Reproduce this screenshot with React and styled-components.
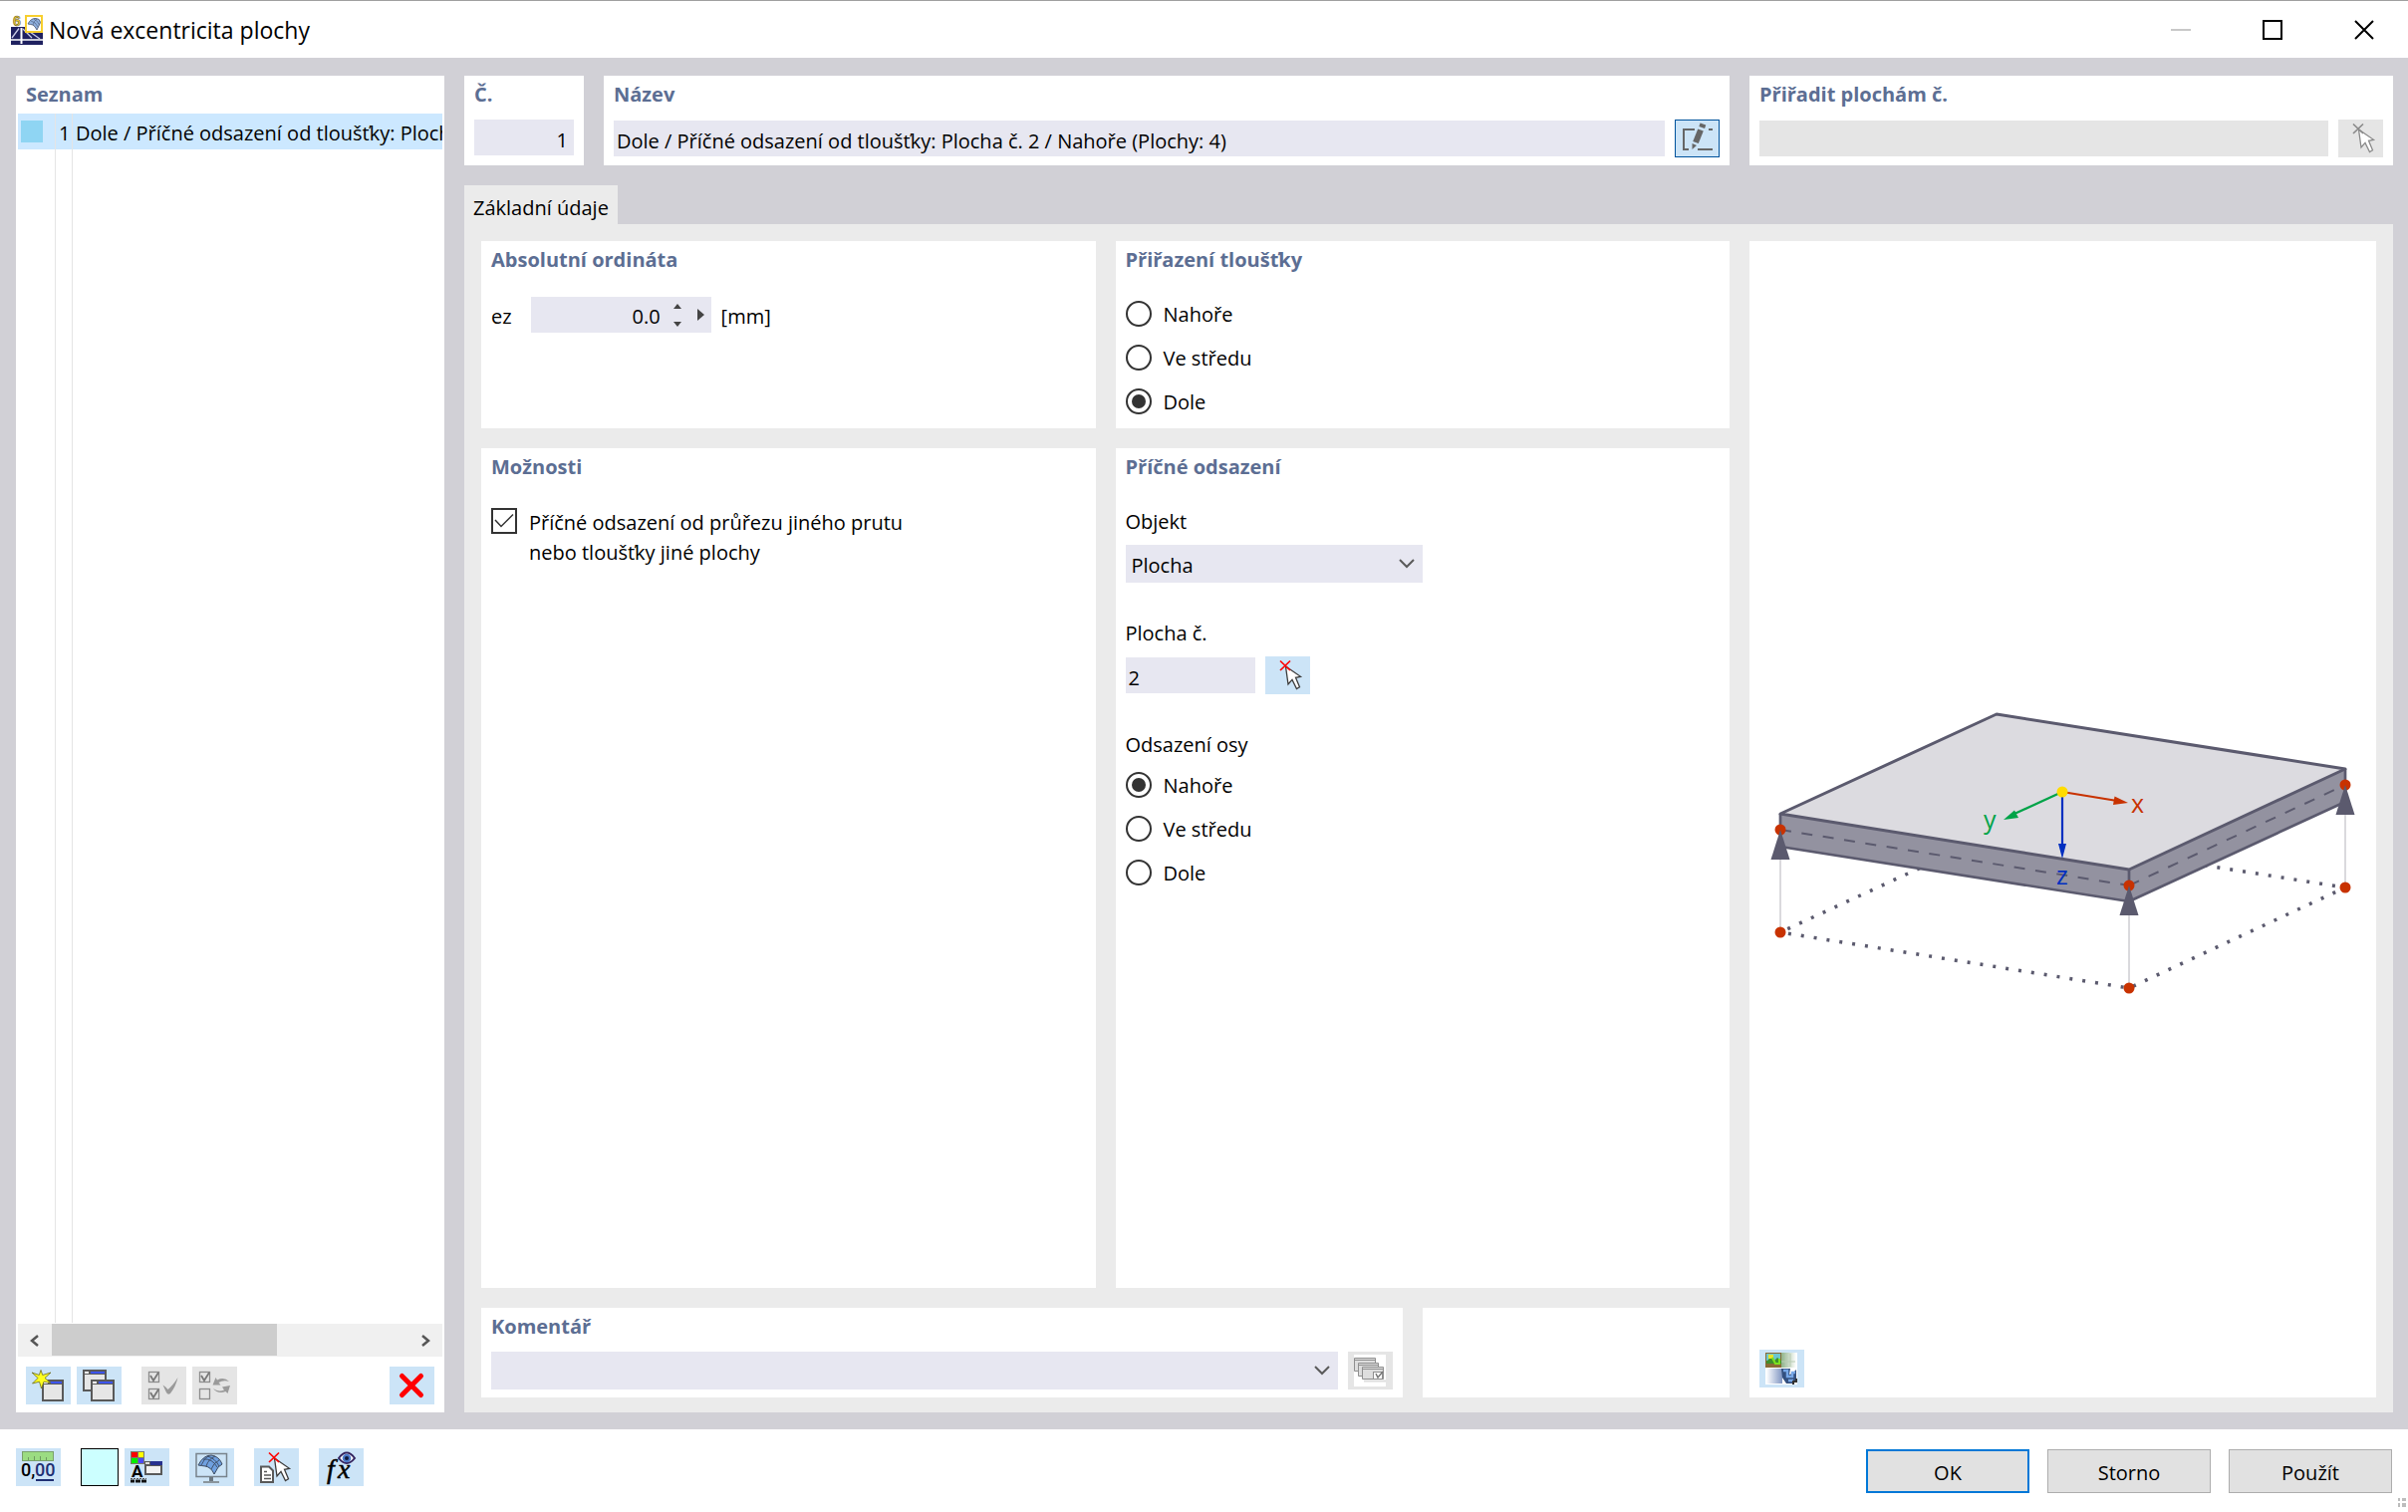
import React, { useState } from "react";
import styled, { createGlobalStyle, css } from "styled-components";

const INK = "#595959";

const GlobalStyle = createGlobalStyle`
  *, *::before, *::after { box-sizing: border-box; }
  body { margin: 0; background: #fff; }
  body, button, input, select {
    font-family: "Open Sans", "Noto Sans", sans-serif;
    font-size: 20px;
    line-height: 28px;
    color: #000;
  }
  h1, h2, p, fieldset { margin: 0; padding: 0; border: 0; min-width: 0; }
`;

const Window = styled.div`
  min-height: 100vh;
  display: flex;
  flex-direction: column;
  background: #fff;
`;

const TitleBar = styled.header`
  height: 58px;
  flex: none;
  display: flex;
  align-items: center;
  gap: 6px;
  padding: 0 19px 0 11px;
  border-top: 1px solid #a0a0a0;
`;

const WindowTitle = styled.h1`
  flex: 1;
  font-size: 23px;
  line-height: 32px;
  font-weight: 400;
`;

const CaptionButton = styled.button`
  width: 50px;
  height: 56px;
  padding: 0;
  border: 0;
  background: none;
  display: grid;
  place-items: center;
`;

const CaptionButtons = styled.div`
  display: flex;
  gap: 42px;
`;

const Body = styled.main`
  flex: 1;
  display: grid;
  grid-template-columns: 430px minmax(0, 1fr);
  gap: 20px;
  padding: 18px 15px 17px 16px;
  background: #d1d0d6;
`;

const Panel = styled.section`
  background: #fff;
  min-width: 0;
  padding: 5px 10px 8px;
  display: flex;
  flex-direction: column;
`;

const Heading = styled.h2`
  font-size: 20px;
  line-height: 28px;
  font-weight: 700;
  color: #5c6e93;
`;

const PanelBody = styled.div`
  padding-top: 27px;
  display: flex;
  flex-direction: column;
`;

const Row = styled.div`
  display: flex;
  align-items: center;
  gap: 10px;
  min-height: 36px;
  padding-top: ${(p) => p.$top || 0}px;
`;

const RowText = styled.span`
  padding-top: 3px;
`;

const field = css`
  height: 36px;
  border: 0;
  border-radius: 0;
  outline: 0;
  background: #e7e7f1;
  padding: 4px 6px 0 3px;
`;

const TextField = styled.input`
  ${field}
  flex: ${(p) => (p.$width ? "none" : "1")};
  width: ${(p) => (p.$width ? `${p.$width}px` : "auto")};
  min-width: 0;
  text-align: ${(p) => p.$align || "left"};
  &:disabled { background: #e5e5e5; }
`;

const IconButton = styled.button`
  width: 45px;
  height: 38px;
  flex: none;
  padding: 0;
  border: 0;
  background: #cce4f7;
  display: block;
  box-shadow: ${(p) => (p.$active ? "inset 0 0 0 1px #00539c" : "none")};
  &:disabled { background: #e5e5e5; }
  svg { display: block; }
`;

/* List column */

const ListPanel = styled(Panel)`
  padding: 5px 2px 8px;
`;

const ListHeading = styled(Heading)`
  padding-left: 8px;
`;

const List = styled.ul`
  flex: 1;
  list-style: none;
  margin: 5px 0 1px;
  padding: 0;
  overflow: hidden;
  background:
    linear-gradient(#e5e5e5, #e5e5e5) 37px 0 / 1px 100% no-repeat,
    linear-gradient(#e5e5e5, #e5e5e5) 54px 0 / 1px 100% no-repeat;
`;

const ListRow = styled.li`
  display: grid;
  grid-template-columns: 38px 17px minmax(0, 1fr);
  height: 36px;
  background: #cce8ff;
  white-space: nowrap;
  overflow: hidden;
`;

const ListCell = styled.span`
  padding: 6px 0 0 3px;
  overflow: hidden;
  border-right: ${(p) => (p.$last ? "0" : "1px solid #e5e5e5")};
`;

const Swatch = styled.span`
  display: block;
  width: 22px;
  height: 22px;
  margin-top: 1px;
  background: #8fd5f3;
`;

const ScrollBar = styled.div`
  height: 33px;
  display: grid;
  grid-template-columns: 34px minmax(0, 1fr) 34px;
  background: #f0f0f0;
`;

const ScrollButton = styled.button`
  padding: 0;
  border: 0;
  background: none;
  display: grid;
  place-items: center;
`;

const ScrollThumb = styled.div`
  width: 63%;
  height: 32px;
  background: #cdcdcd;
`;

const ListTools = styled.div`
  display: flex;
  gap: 6px;
  padding: 10px 8px 0;
`;

const ToolGap = styled.span`
  width: ${(p) => (p.$fill ? "auto" : "8px")};
  flex: ${(p) => (p.$fill ? "1" : "none")};
`;

/* Content column */

const Content = styled.div`
  display: flex;
  flex-direction: column;
  min-width: 0;
`;

const TopPanels = styled.div`
  display: grid;
  grid-template-columns: 120px minmax(0, 1130fr) minmax(0, 646fr);
  gap: 20px;
`;

const TabList = styled.div`
  display: flex;
  padding-top: 20px;
`;

const Tab = styled.button`
  height: 39px;
  border: 0;
  padding: 6px 9px 0;
  background: #ebebeb;
`;

const TabPage = styled.div`
  flex: 1;
  display: grid;
  grid-template-columns: minmax(0, 1253fr) minmax(0, 629fr);
  gap: 20px;
  padding: 17px 17px 15px;
  background: #ebebeb;
`;

const Form = styled.div`
  display: grid;
  grid-template-rows: 188px minmax(0, 1fr) auto;
  gap: 20px;
  min-width: 0;
`;

const Halves = styled.div`
  display: grid;
  grid-template-columns: minmax(0, 1fr) minmax(0, 1fr);
  gap: 20px;
`;

const CommentRow = styled.div`
  display: grid;
  grid-template-columns: minmax(0, 3fr) minmax(0, 1fr);
  gap: 20px;
`;

const Choice = styled.label`
  display: flex;
  gap: 12px;
  min-height: 28px;
  line-height: ${(p) => p.$lineHeight || 28}px;
`;

const Radio = styled.input.attrs({ type: "radio" })`
  appearance: none;
  width: 26px;
  height: 26px;
  flex: none;
  margin: 0;
  border: 2px solid #333;
  border-radius: 50%;
  background: #fff;
  display: grid;
  place-items: center;
  &:checked::before {
    content: "";
    width: 14px;
    height: 14px;
    border-radius: 50%;
    background: #333;
  }
`;

const CheckBoxFrame = styled.span`
  display: grid;
  width: 26px;
  height: 26px;
  flex: none;
  > * { grid-area: 1 / 1; }
  svg { pointer-events: none; visibility: ${(p) => (p.$on ? "visible" : "hidden")}; }
`;

const CheckBox = styled.input.attrs({ type: "checkbox" })`
  appearance: none;
  margin: 0;
  width: 26px;
  height: 26px;
  border: 2px solid #333;
  background: #fff;
`;

const RadioGroup = styled.fieldset`
  display: flex;
  flex-direction: column;
  gap: 16px;
`;

const Legend = styled.legend`
  padding: 0;
  margin-bottom: 13px;
`;

const FieldGroup = styled.div`
  display: flex;
  flex-direction: column;
  gap: 9px;
  margin-bottom: 37px;
`;

const SelectFrame = styled.div`
  display: grid;
  align-items: center;
  flex: ${(p) => (p.$width ? "none" : "1")};
  width: ${(p) => (p.$width ? `${p.$width}px` : "auto")};
  min-width: 0;
  > * { grid-area: 1 / 1; }
  svg { justify-self: end; margin-right: 8px; pointer-events: none; }
`;

const Select = styled.select`
  ${field}
  appearance: none;
  height: 38px;
  width: 100%;
  padding: 3px 36px 0 6px;
`;

const SpinBox = styled.div`
  display: flex;
  width: 181px;
  height: 36px;
  background: #e7e7f1;
  margin-left: 9px;
`;

const SpinInput = styled.input`
  ${field}
  flex: 1;
  min-width: 0;
  text-align: right;
  padding: 3px 3px 0 0;
`;

const SpinButtons = styled.div`
  width: 28px;
  display: grid;
  grid-template-rows: 18px 18px;
`;

const SpinButton = styled.button`
  width: ${(p) => p.$width}px;
  padding: 0;
  border: 0;
  background: none;
  display: grid;
  place-items: center;
`;

const Preview = styled.section`
  background: #fff;
  min-width: 0;
  display: flex;
  flex-direction: column;
  padding-bottom: 10px;
`;

const Drawing = styled.div`
  flex: 1;
  min-height: 0;
  svg { display: block; width: 100%; height: 100%; }
`;

const PreviewTools = styled.div`
  padding-left: 10px;
`;

/* Footer */

const Footer = styled.footer`
  height: 83px;
  flex: none;
  display: flex;
  align-items: flex-start;
  padding: 19px 2px 0 16px;
`;

const FooterTools = styled.div`
  flex: 1;
  display: flex;
  gap: 20px;
`;

const ToolPair = styled.div`
  display: flex;
  gap: 6px;
`;

const ColorButton = styled.button`
  width: 38px;
  height: 38px;
  padding: 0;
  border: 1px solid #000;
  background: #ccffff;
`;

const Actions = styled.div`
  display: flex;
  gap: 18px;
  padding-top: 1px;
`;

const ActionButton = styled.button`
  width: 164px;
  height: 44px;
  padding: 4px 0 0;
  border: ${(p) => (p.$primary ? "2px solid #0078d7" : "1px solid #adadad")};
  background: #e1e1e1;
`;

const Grip = styled.svg`
  align-self: flex-end;
  margin: 0 0 4px 6px;
`;

/* Icons */

const Icon = ({ children }) => (
  <svg width="45" height="38" viewBox="0 0 45 38" fill="none" aria-hidden="true">
    {children}
  </svg>
);

const AppIcon = () => (
  <svg width="32" height="38" viewBox="0 -4 32 38" aria-hidden="true">
    <rect x="0" y="12" width="32" height="18" fill="#1f2160" />
    <path d="M0 25H32" stroke="#fff" strokeWidth="1.500" />
    <path d="M10.500 13V29" stroke="#fff" strokeWidth="2" />
    <path d="M1 23L8 13.500M12 14l9 9M19 17l10 7" stroke="#c9cbe6" strokeWidth="1.300" fill="none" />
    <text x="2" y="10.500" fontFamily="Liberation Sans" fontWeight="700" fontSize="14" fill="#f5cf2c" stroke="#5f5a3a" strokeWidth=".6">6</text>
    <rect x="15" y="1" width="16" height="16" fill="#fff" stroke="#f7cf2f" strokeWidth="2" />
    <path d="M17 9Q20 3 25 3.500q4 0 4.500 4L28 11l-2 4q-2-4-4-5-2-.500-5-1z" fill="#8fb0df" stroke="#55617a" strokeWidth=".9" />
    <path d="M20 6q5 1 7 6M23 4q4 2 5.500 6M22 10q1-4 4-6" stroke="#4a5a78" strokeWidth=".6" fill="none" />
  </svg>
);

const MiniWindow = ({ x, y, w = 22, h = 22 }) => (
  <g>
    <rect x={x + 1} y={y + 1} width={w - 2} height={h - 2} fill="#e6e6e6" stroke={INK} strokeWidth="2" />
    <rect x={x + 2} y={y + 2} width={w - 4} height="2" fill="#3d55f5" />
    <rect x={x + 1} y={y + 2} width="7" height="2" fill={INK} />
    <rect x={x + 2} y={y + 2} width="4" height="2" fill="#fff" />
    <rect x={x + 1} y={y + 4} width={w - 2} height="1" fill={INK} />
  </g>
);

const NewIcon = () => (
  <Icon>
    <MiniWindow x={16} y={13} />
    <path d="M15 3.500l1.700 5 8.300-2.500-6 5.500 6 5-7-1.300L15.500 22l-2-6.800-7 1.800 5.500-5.500L6 6l7.300 2.500z" fill="#ffff1f" stroke="#6b6b1d" strokeWidth=".8" />
  </Icon>
);

const CopyIcon = () => (
  <Icon>
    <MiniWindow x={6} y={3} w={24} />
    <MiniWindow x={14} y={13} w={24} />
  </Icon>
);

const TickBox = ({ y, on = true }) => (
  <g stroke="#8c8c8c">
    <rect x="7.500" y={y + 0.5} width="10" height="10" strokeWidth="1.300" />
    {on && <path d={`M9 ${y + 4}l3 5 5-8`} stroke="#777" strokeWidth="1.800" />}
  </g>
);

const SelectAllIcon = () => (
  <Icon>
    <TickBox y={5} />
    <TickBox y={22} />
    <path d="M21.500 18.500q3 1.500 5 4.500 5-4 10-12-2 9-7.500 16-2.500 2-4-1-1.500-3-3.500-7.500z" fill="#9a9a9a" />
  </Icon>
);

const InvertIcon = () => (
  <Icon>
    <TickBox y={5} />
    <TickBox y={22} on={false} />
    <path d="M37 15q-5-5-12-1.500l-1.500-2.500-3 7.500h8l-2-2.500q5-3 10.500-1zM21 22q5 4 11 1.500l-2-3 8-1.500-2.500 8-2-2q-8 3-12.500-3z" fill="#9a9a9a" />
  </Icon>
);

const DeleteIcon = () => (
  <Icon>
    <path d="M12.500 9.500l19 19M31.500 9.500l-19 19" stroke="#f00" strokeWidth="5" strokeLinecap="round" />
  </Icon>
);

const Cursor = ({ gray }) => (
  <g>
    <path
      d="M20.500 10l15 10.300-5 1 4 9.500-3 1.800-4.500-9.200-4 4.600z"
      fill="#fff"
      stroke={gray ? "#8a8a8a" : "#3c3c3c"}
      strokeWidth="1.300"
    />
    <path d="M15 4.500l10 9.500M25 4.500L15 14" stroke={gray ? "#8a8a8a" : "#f00"} strokeWidth="1.700" />
  </g>
);

const PickIcon = ({ gray }) => (
  <Icon>
    <Cursor gray={gray} />
  </Icon>
);

const EditIcon = () => (
  <Icon>
    <path d="M20 10H9v20h5M23 30h15M34 10h4" stroke="#666" strokeWidth="2" />
    <path d="M26 10.500l-5 12.500" stroke="#666" strokeWidth="6" />
    <path d="M28.400 4.500l-1.200 3.500" stroke="#666" strokeWidth="6" />
    <path d="M17.500 24l4.500 2-4.500 4z" fill="#666" />
  </Icon>
);

const TemplatesIcon = () => (
  <Icon>
    <rect x="6" y="3" width="32" height="32" fill="#fff" />
    <path d="M16 29.500h22" stroke="#ddd" strokeWidth="2" />
    <g fill="#dedede" stroke="#8f8f8f">
      <path d="M6.500 6.500h21v13h-21z" />
      <path d="M6.500 8.500h21" />
      <path d="M10.500 11.500h20v13h-20z" />
      <path d="M10.500 13.500h20" />
      <path d="M14.500 15.500h21v12h-21z" />
      <path d="M14.500 17.500h21" />
      <rect x="25.500" y="20.500" width="9" height="7" fill="#fff" />
    </g>
    <path d="M28 22l2 4 5-6" stroke="#777" strokeWidth="1.500" />
  </Icon>
);

const ImageIcon = () => (
  <Icon>
    <defs>
      <linearGradient id="fade" x1="0" x2="1">
        <stop offset="0" stopColor="#8fb38a" />
        <stop offset="1" stopColor="#fff" />
      </linearGradient>
      <linearGradient id="fadeBlue" x1="1" x2="0">
        <stop offset="0" stopColor="#7f95c2" />
        <stop offset="1" stopColor="#fff" />
      </linearGradient>
    </defs>
    <rect x="6" y="3" width="32" height="32" fill="#fff" />
    <rect x="6" y="3" width="16" height="15" fill="#8a6a35" />
    <rect x="7" y="4" width="14" height="7" fill="#6cc6cf" />
    <path d="M7 12l4-4 4 3 3-3 4 3v3H7z" fill="#3d8f2b" />
    <path d="M9 5h5v4H9z" fill="#e8e32a" />
    <path d="M13 8l3 6h4V9" stroke="#7be01f" strokeWidth="2" />
    <rect x="22" y="3" width="15" height="15" fill="url(#fade)" />
    <path d="M22 12h14M27 4v13M31 4v13" stroke="#b9ccb4" />
    <rect x="7" y="19" width="16" height="15" fill="url(#fadeBlue)" />
    <path d="M22 19h9l-1 6 3-1 4-4v9l-3 5h-7l-4-6z" fill="#33507f" />
    <path d="M24 21h4v6h5v-4h3M29 31h5" stroke="#77a8e8" strokeWidth="2.500" />
    <path d="M37 29v3h-3v3" stroke="#333" strokeWidth="2" />
  </Icon>
);

const UnitsIcon = () => (
  <Icon>
    <rect x="6.500" y="3.500" width="31" height="9" fill="#9bdc82" stroke="#7aa06b" />
    <path d="M12.500 12V9M18.500 12V8M24.500 12V8M30.500 12V9" stroke="#6f9a60" />
    <g fontFamily="Roboto" fontSize="18" fontWeight="500">
      <text x="5" y="28" fill="#000">0,</text>
      <text x="19" y="28" fill="#1f2f73">00</text>
    </g>
    <rect x="20" y="31" width="18" height="2" fill="#1f2f73" />
  </Icon>
);

const DisplayIcon = () => (
  <Icon>
    <rect x="6" y="3" width="14" height="13" fill="#7a7a6a" />
    <rect x="7" y="4" width="6" height="5" fill="#f00" />
    <rect x="14" y="4" width="5" height="5" fill="#ff0" />
    <rect x="7" y="10" width="6" height="5" fill="#0e0" />
    <rect x="14" y="10" width="5" height="5" fill="#4b4bf5" />
    <text x="7" y="29" fontFamily="Roboto" fontSize="17" fontWeight="700" fill="#000">A</text>
    <path d="M6 30.500h16" stroke="#555" strokeWidth="1" strokeDasharray="2 1" />
    <path d="M6 33h4M11 33h5M17 33h5" stroke="#111" strokeWidth="3" />
    <rect x="20" y="13" width="18" height="14" fill={INK} />
    <rect x="26" y="13" width="12" height="4" fill="#27318f" />
    <rect x="21" y="14" width="4" height="2" fill="#ddd" />
    <rect x="22" y="18" width="14" height="7" fill="#f2f2f2" />
  </Icon>
);

const MonitorIcon = () => (
  <Icon>
    <rect x="7" y="5.500" width="30.500" height="23" stroke="#78838c" strokeWidth="1.500" />
    <rect x="20" y="29" width="4" height="4" fill="#6c7780" />
    <rect x="14" y="33" width="16" height="2" fill="#8a959d" />
    <path d="M9 17Q14 7 22 7q8 1 11 9l-4 3-4 7q-3-7-9-8-4-.500-7-1z" fill="#6fa0e0" stroke="#3b4a60" />
    <path d="M14 11q9-1 14 8M18 8q8 2 12 10M12 17q3-7 8-10M17 18q2-7 9-10M22 21q2-6 8-9" stroke="#3b4a60" strokeWidth=".9" />
  </Icon>
);

const PickObjectIcon = () => (
  <Icon>
    <path d="M7 18.500h8l4 4V34H7z" fill="#fff" stroke={INK} strokeWidth="2" />
    <path d="M10 23.500h3M10 27h7M10 30.500h7" stroke={INK} strokeWidth="1.500" />
    <Cursor />
  </Icon>
);

const FormulaIcon = () => (
  <Icon>
    <g fontFamily="Liberation Serif" fontStyle="italic" fontSize="28" fill="#000" stroke="#000" strokeWidth=".5">
      <text x="8" y="30">f</text>
      <text x="19" y="30">x</text>
    </g>
    <path d="M20 10Q28-1 36 10 28 20 20 10z" fill="#fff" stroke="#33245f" strokeWidth="2" />
    <circle cx="28" cy="10" r="4.300" fill="#4b78c8" />
    <circle cx="28" cy="10" r="2" fill="#101a3a" />
  </Icon>
);

const Chevron = () => (
  <svg width="16" height="10" viewBox="0 0 16 10" fill="none" aria-hidden="true">
    <path d="M1 1l7 7 7-7" stroke="#5a5a5a" strokeWidth="2" />
  </svg>
);

const ScrollArrow = ({ right }) => (
  <svg width="10" height="12" viewBox="0 0 10 12" fill="none" aria-hidden="true">
    <path d={right ? "M2 1l6 5-6 5" : "M8 1L2 6l6 5"} stroke="#555" strokeWidth="2.500" />
  </svg>
);

const Triangle = ({ d, w, h }) => (
  <svg width={w} height={h} viewBox={`0 0 ${w} ${h}`} aria-hidden="true">
    <path d={d} fill="#444" />
  </svg>
);

const EDGE = "#5b5a6e";
const RED = "#c83200";

const supports = [
  { x: 31, top: 153, bottom: 256 },
  { x: 381, top: 209, bottom: 312 },
  { x: 598, top: 108, bottom: 211 },
];

const SlabDrawing = () => (
  <svg viewBox="0 -438 629 1113" role="img" aria-label="Excentricita plochy">
    <path
      d="M31 256L381 312 598 211M31 256L248 156 598 211"
      fill="none"
      stroke={EDGE}
      strokeWidth="3.500"
      strokeDasharray="3 10"
      strokeDashoffset="-8"
    />
    <path d="M31 137L381 193V225L31 170z" fill="#9392a0" />
    <path d="M381 193L598 92V125L381 225z" fill="#9392a0" />
    <path d="M248 37L598 92 381 193 31 137z" fill="#dcdbe0" />
    <g fill="none" stroke={EDGE} strokeWidth="2.700" strokeLinejoin="round">
      <path d="M248 37L598 92 381 193 31 137z" strokeWidth="3" />
      <path d="M31 137V170L381 225 598 125V92M381 193V225" />
    </g>
    <path d="M31 153L381 209" stroke={EDGE} strokeWidth="2" strokeDasharray="11 10.600" />
    <path d="M381 209L598 108" stroke={EDGE} strokeWidth="2" strokeDasharray="11 10.600" />
    {supports.map((s) => (
      <g key={s.x}>
        <path d={`M${s.x} ${s.top}V${s.bottom}`} stroke="#b5b4bb" />
        <circle cx={s.x} cy={s.top} r="5.500" fill={RED} />
        <circle cx={s.x} cy={s.bottom} r="5.500" fill={RED} />
        <path d={`M${s.x} ${s.top}l9.500 30h-19z`} fill={EDGE} />
      </g>
    ))}
    <g strokeWidth="2.200">
      <path d="M314 115L366 123.500" stroke={RED} />
      <path d="M380 126l-15 2 1.500-8.500z" fill={RED} />
      <path d="M314 115L266 137" stroke="#00a348" />
      <path d="M255 143l11-9.500 4 7.500z" fill="#00a348" />
      <path d="M314 115V168" stroke="#002fc0" />
      <path d="M314 182l-4-15h8z" fill="#002fc0" />
    </g>
    <circle cx="314" cy="115" r="5.500" fill="#ffdc00" />
    <g fontFamily="Open Sans" fontSize="25">
      <text x="383" y="136" fill={RED}>x</text>
      <text x="235" y="152" fill="#00a348">y</text>
      <text x="308" y="208" fill="#002fc0">z</text>
    </g>
  </svg>
);

const positions = ["Nahoře", "Ve středu", "Dole"];

const PositionRadios = ({ name, legend, label, initial }) => {
  const [value, setValue] = useState(initial);
  return (
    <RadioGroup aria-label={label}>
      {legend && <Legend>{legend}</Legend>}
      {positions.map((p) => (
        <Choice key={p}>
          <Radio name={name} value={p} checked={value === p} onChange={() => setValue(p)} />
          <span>{p}</span>
        </Choice>
      ))}
    </RadioGroup>
  );
};

export default function App() {
  const [fromOther, setFromOther] = useState(true);
  return (
    <Window>
      <GlobalStyle />
      <TitleBar>
        <AppIcon />
        <WindowTitle>Nová excentricita plochy</WindowTitle>
        <CaptionButtons>
          <CaptionButton aria-label="Minimalizovat" disabled>
            <svg width="20" height="20"><path d="M0 10h20" stroke="#c8c8c8" strokeWidth="2" /></svg>
          </CaptionButton>
          <CaptionButton aria-label="Maximalizovat">
            <svg width="20" height="20"><rect x="1" y="1" width="18" height="18" fill="none" stroke="#000" strokeWidth="2" /></svg>
          </CaptionButton>
          <CaptionButton aria-label="Zavřít">
            <svg width="20" height="20"><path d="M1 1l18 18M19 1L1 19" stroke="#000" strokeWidth="2" /></svg>
          </CaptionButton>
        </CaptionButtons>
      </TitleBar>

      <Body>
        <ListPanel>
          <ListHeading>Seznam</ListHeading>
          <List>
            <ListRow>
              <ListCell><Swatch /></ListCell>
              <ListCell>1</ListCell>
              <ListCell $last>Dole / Příčné odsazení od tloušťky: Plocha č. 2 / Nahoře (Plochy: 4)</ListCell>
            </ListRow>
          </List>
          <ScrollBar>
            <ScrollButton aria-label="Posunout vlevo"><ScrollArrow /></ScrollButton>
            <ScrollThumb />
            <ScrollButton aria-label="Posunout vpravo"><ScrollArrow right /></ScrollButton>
          </ScrollBar>
          <ListTools>
            <IconButton aria-label="Nový"><NewIcon /></IconButton>
            <IconButton aria-label="Kopírovat"><CopyIcon /></IconButton>
            <ToolGap />
            <IconButton aria-label="Vybrat vše" disabled><SelectAllIcon /></IconButton>
            <IconButton aria-label="Obrátit výběr" disabled><InvertIcon /></IconButton>
            <ToolGap $fill />
            <IconButton aria-label="Smazat"><DeleteIcon /></IconButton>
          </ListTools>
        </ListPanel>

        <Content>
          <TopPanels>
            <Panel>
              <Heading as="label" htmlFor="number">Č.</Heading>
              <Row $top={11}>
                <TextField id="number" defaultValue="1" $align="right" />
              </Row>
            </Panel>
            <Panel>
              <Heading as="label" htmlFor="name">Název</Heading>
              <Row $top={11}>
                <TextField id="name" defaultValue="Dole / Příčné odsazení od tloušťky: Plocha č. 2 / Nahoře (Plochy: 4)" />
                <IconButton aria-label="Upravit název" $active><EditIcon /></IconButton>
              </Row>
            </Panel>
            <Panel>
              <Heading as="label" htmlFor="assigned">Přiřadit plochám č.</Heading>
              <Row $top={11}>
                <TextField id="assigned" disabled />
                <IconButton aria-label="Vybrat plochy" disabled><PickIcon gray /></IconButton>
              </Row>
            </Panel>
          </TopPanels>

          <TabList role="tablist">
            <Tab role="tab" aria-selected="true">Základní údaje</Tab>
          </TabList>

          <TabPage role="tabpanel">
            <Form>
              <Halves>
                <Panel>
                  <Heading>Absolutní ordináta</Heading>
                  <Row $top={23}>
                    <RowText as="label" htmlFor="ez">ez</RowText>
                    <SpinBox>
                      <SpinInput id="ez" defaultValue="0.0" />
                      <SpinButtons>
                        <SpinButton $width={28} aria-label="Zvýšit"><Triangle w={8} h={5} d="M4 0l4 5H0z" /></SpinButton>
                        <SpinButton $width={28} aria-label="Snížit"><Triangle w={8} h={5} d="M0 0h8L4 5z" /></SpinButton>
                      </SpinButtons>
                      <SpinButton $width={20} aria-label="Další možnosti"><Triangle w={7} h={12} d="M0 0l7 6-7 6z" /></SpinButton>
                    </SpinBox>
                    <RowText>[mm]</RowText>
                  </Row>
                </Panel>
                <Panel>
                  <Heading>Přiřazení tloušťky</Heading>
                  <PanelBody>
                    <PositionRadios name="thickness" label="Přiřazení tloušťky" initial="Dole" />
                  </PanelBody>
                </Panel>
              </Halves>

              <Halves>
                <Panel>
                  <Heading>Možnosti</Heading>
                  <PanelBody>
                    <Choice $lineHeight={30}>
                      <CheckBoxFrame $on={fromOther}>
                        <CheckBox checked={fromOther} onChange={(e) => setFromOther(e.target.checked)} />
                        <svg width="26" height="26" viewBox="0 0 26 26" fill="none">
                          <path d="M4 12l6 6.500L22 6.500" stroke="#333" strokeWidth="1.500" />
                        </svg>
                      </CheckBoxFrame>
                      <span>
                        Příčné odsazení od průřezu jiného prutu
                        <br />
                        nebo tloušťky jiné plochy
                      </span>
                    </Choice>
                  </PanelBody>
                </Panel>
                <Panel>
                  <Heading>Příčné odsazení</Heading>
                  <PanelBody>
                    <FieldGroup>
                      <label htmlFor="object">Objekt</label>
                      <SelectFrame $width={298}>
                        <Select id="object" defaultValue="Plocha">
                          <option>Plocha</option>
                          <option>Prut</option>
                        </Select>
                        <Chevron />
                      </SelectFrame>
                    </FieldGroup>
                    <FieldGroup>
                      <label htmlFor="surface">Plocha č.</label>
                      <Row>
                        <TextField id="surface" defaultValue="2" $width={130} />
                        <IconButton aria-label="Vybrat plochu"><PickIcon /></IconButton>
                      </Row>
                    </FieldGroup>
                    <PositionRadios name="axis" legend="Odsazení osy" initial="Nahoře" />
                  </PanelBody>
                </Panel>
              </Halves>

              <CommentRow>
                <Panel>
                  <Heading as="label" htmlFor="comment">Komentář</Heading>
                  <Row $top={11}>
                    <SelectFrame>
                      <Select id="comment"><option /></Select>
                      <Chevron />
                    </SelectFrame>
                    <IconButton aria-label="Uložené komentáře" disabled><TemplatesIcon /></IconButton>
                  </Row>
                </Panel>
                <Panel />
              </CommentRow>
            </Form>

            <Preview>
              <Drawing><SlabDrawing /></Drawing>
              <PreviewTools>
                <IconButton aria-label="Obrázek"><ImageIcon /></IconButton>
              </PreviewTools>
            </Preview>
          </TabPage>
        </Content>
      </Body>

      <Footer>
        <FooterTools>
          <IconButton aria-label="Jednotky"><UnitsIcon /></IconButton>
          <ToolPair>
            <ColorButton aria-label="Barva" />
            <IconButton aria-label="Zobrazení"><DisplayIcon /></IconButton>
          </ToolPair>
          <IconButton aria-label="Náhled"><MonitorIcon /></IconButton>
          <IconButton aria-label="Vybrat objekt"><PickObjectIcon /></IconButton>
          <IconButton aria-label="Vzorec"><FormulaIcon /></IconButton>
        </FooterTools>
        <Actions>
          <ActionButton $primary>OK</ActionButton>
          <ActionButton>Storno</ActionButton>
          <ActionButton>Použít</ActionButton>
        </Actions>
        <Grip width="8" height="10" viewBox="0 0 8 10" fill="#bdbdbd" aria-hidden="true">
          <path d="M0 0h2v3H0zM4 0h4v3H4zM0 5h2v4H0zM4 5h4v4H4z" />
        </Grip>
      </Footer>
    </Window>
  );
}
